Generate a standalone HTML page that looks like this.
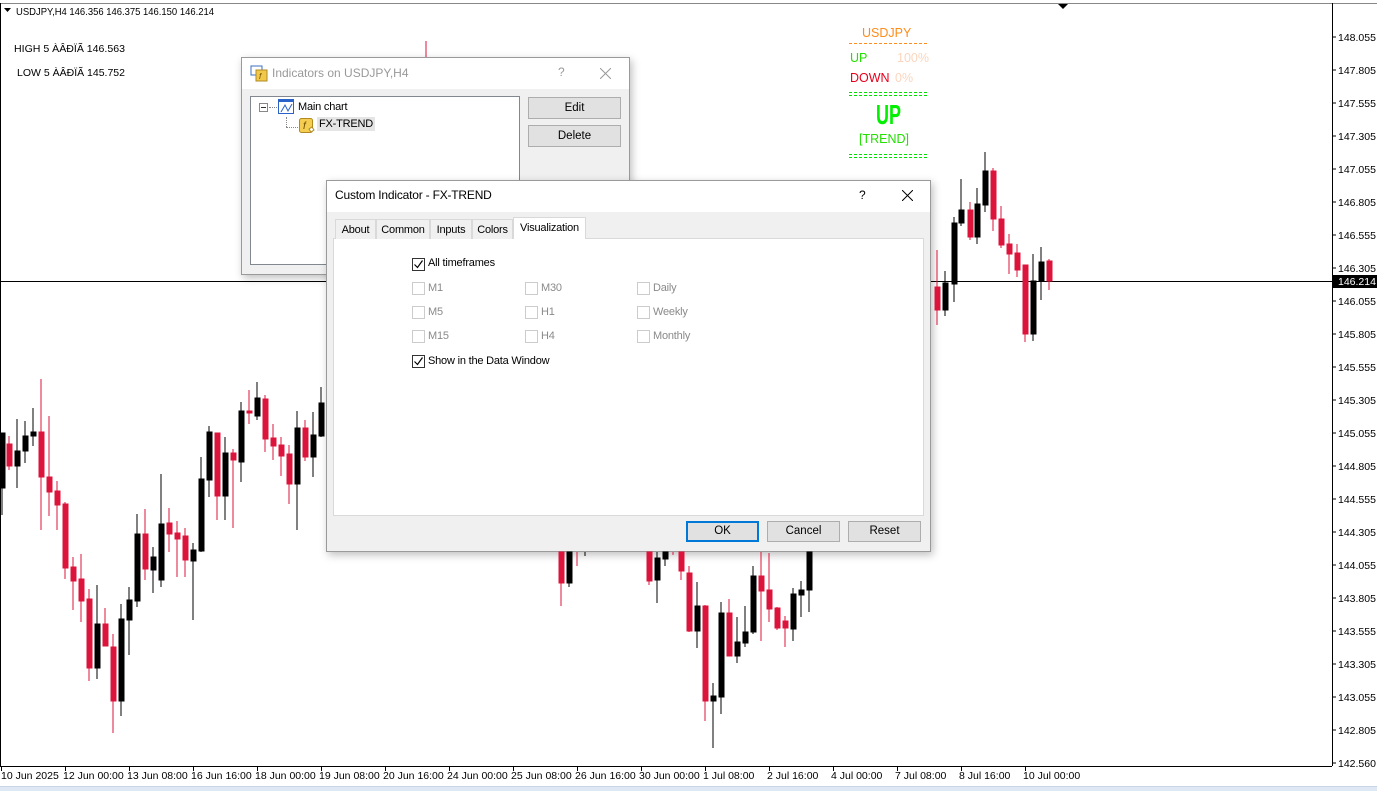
<!DOCTYPE html>
<html><head><meta charset="utf-8"><style>
*{margin:0;padding:0;box-sizing:border-box}
body{width:1377px;height:791px;overflow:hidden;background:#fff;font-family:"Liberation Sans",sans-serif;position:relative}
.abs{position:absolute;white-space:nowrap}
.dlg{position:absolute;background:#f0f0f0;border:1px solid #9a9a9a;box-shadow:2px 3px 8px rgba(0,0,0,.25)}
.tb{position:absolute;left:0;right:0;top:0;background:#fff;font-size:12px}
.btn{position:absolute;background:#e1e1e1;border:1px solid #adadad;font-size:11.5px;text-align:center;color:#000}
.cb{position:absolute;width:13px;height:13px;border:1px solid #333;background:#fff}
.cb.d{border-color:#ccc}
.lbl{position:absolute;font-size:11px;white-space:nowrap;letter-spacing:-0.2px}
.g{color:#8a8a8a}
.tab{position:absolute;top:219px;height:20px;border:1px solid #d9d9d9;border-bottom:none;font-size:11px;padding:4px 0 0;text-align:center;background:#f0f0f0;letter-spacing:-0.2px}
</style></head><body>
<svg class="abs" style="left:0;top:0" width="1377" height="791">
<line x1="0" y1="3.5" x2="1377" y2="3.5" stroke="#888"/>
<line x1="0.5" y1="3" x2="0.5" y2="766" stroke="#000"/>
<line x1="1332.5" y1="3" x2="1332.5" y2="766" stroke="#000"/>
<line x1="0" y1="766.5" x2="1332" y2="766.5" stroke="#000"/>
<line x1="0" y1="281.5" x2="1332" y2="281.5" stroke="#000"/>
<path d="M1058 4h10l-5 5z" fill="#000"/>
<rect x="0" y="786" width="1377" height="5" fill="#dde8f4"/>
<line x1="0" y1="786.5" x2="1377" y2="786.5" stroke="#c8d6e6"/>
<g font-family="Liberation Sans" font-size="10.5" fill="#000">
<g stroke="#000">
<line x1="1332" y1="37" x2="1336" y2="37"/><line x1="1332" y1="70" x2="1336" y2="70"/><line x1="1332" y1="103" x2="1336" y2="103"/><line x1="1332" y1="136" x2="1336" y2="136"/><line x1="1332" y1="169" x2="1336" y2="169"/><line x1="1332" y1="202" x2="1336" y2="202"/><line x1="1332" y1="235" x2="1336" y2="235"/><line x1="1332" y1="268" x2="1336" y2="268"/><line x1="1332" y1="301" x2="1336" y2="301"/><line x1="1332" y1="334" x2="1336" y2="334"/><line x1="1332" y1="367" x2="1336" y2="367"/><line x1="1332" y1="400" x2="1336" y2="400"/><line x1="1332" y1="433" x2="1336" y2="433"/><line x1="1332" y1="466" x2="1336" y2="466"/><line x1="1332" y1="499" x2="1336" y2="499"/><line x1="1332" y1="532" x2="1336" y2="532"/><line x1="1332" y1="565" x2="1336" y2="565"/><line x1="1332" y1="598" x2="1336" y2="598"/><line x1="1332" y1="631" x2="1336" y2="631"/><line x1="1332" y1="664" x2="1336" y2="664"/><line x1="1332" y1="697" x2="1336" y2="697"/><line x1="1332" y1="730" x2="1336" y2="730"/><line x1="1332" y1="763" x2="1336" y2="763"/>
</g>
<text x="1338" y="41">148.055</text><text x="1338" y="74">147.805</text><text x="1338" y="107">147.555</text><text x="1338" y="140">147.305</text><text x="1338" y="173">147.055</text><text x="1338" y="206">146.805</text><text x="1338" y="239">146.555</text><text x="1338" y="272">146.305</text><text x="1338" y="305">146.055</text><text x="1338" y="338">145.805</text><text x="1338" y="371">145.555</text><text x="1338" y="404">145.305</text><text x="1338" y="437">145.055</text><text x="1338" y="470">144.805</text><text x="1338" y="503">144.555</text><text x="1338" y="536">144.305</text><text x="1338" y="569">144.055</text><text x="1338" y="602">143.805</text><text x="1338" y="635">143.555</text><text x="1338" y="668">143.305</text><text x="1338" y="701">143.055</text><text x="1338" y="734">142.805</text><text x="1338" y="767">142.560</text>
<rect x="1333" y="275" width="44" height="13" fill="#000"/>
<text x="1338" y="285" fill="#fff">146.214</text>
<g stroke="#000"><line x1="1.5" y1="766" x2="1.5" y2="771"/><line x1="65.5" y1="766" x2="65.5" y2="771"/><line x1="129.5" y1="766" x2="129.5" y2="771"/><line x1="193.5" y1="766" x2="193.5" y2="771"/><line x1="257.5" y1="766" x2="257.5" y2="771"/><line x1="321.5" y1="766" x2="321.5" y2="771"/><line x1="385.5" y1="766" x2="385.5" y2="771"/><line x1="449.5" y1="766" x2="449.5" y2="771"/><line x1="513.5" y1="766" x2="513.5" y2="771"/><line x1="577.5" y1="766" x2="577.5" y2="771"/><line x1="641.5" y1="766" x2="641.5" y2="771"/><line x1="705.5" y1="766" x2="705.5" y2="771"/><line x1="769.5" y1="766" x2="769.5" y2="771"/><line x1="833.5" y1="766" x2="833.5" y2="771"/><line x1="897.5" y1="766" x2="897.5" y2="771"/><line x1="961.5" y1="766" x2="961.5" y2="771"/><line x1="1025.5" y1="766" x2="1025.5" y2="771"/></g>
<text x="1" y="779">10 Jun 2025</text><text x="63" y="779">12 Jun 00:00</text><text x="127" y="779">13 Jun 08:00</text><text x="191" y="779">16 Jun 16:00</text><text x="255" y="779">18 Jun 00:00</text><text x="319" y="779">19 Jun 08:00</text><text x="383" y="779">20 Jun 16:00</text><text x="447" y="779">24 Jun 00:00</text><text x="511" y="779">25 Jun 08:00</text><text x="575" y="779">26 Jun 16:00</text><text x="639" y="779">30 Jun 00:00</text><text x="703" y="779">1 Jul 08:00</text><text x="767" y="779">2 Jul 16:00</text><text x="831" y="779">4 Jul 00:00</text><text x="895" y="779">7 Jul 08:00</text><text x="959" y="779">8 Jul 16:00</text><text x="1023" y="779">10 Jul 00:00</text>
<path d="M4 8h7l-3.5 4z" fill="#000"/>
<text x="16" y="15" textLength="198" lengthAdjust="spacingAndGlyphs">USDJPY,H4  146.356 146.375 146.150 146.214</text>
<text x="14" y="52" textLength="111" lengthAdjust="spacingAndGlyphs">HIGH 5 ÀÂÐÏÃ    146.563</text>
<text x="17" y="76" textLength="108" lengthAdjust="spacingAndGlyphs">LOW 5 ÀÂÐÏÃ     145.752</text>
</g>
<g font-family="Liberation Sans" font-size="12.5">
<text x="862" y="37" fill="#ff8c1a">USDJPY</text>
<line x1="849" y1="43.5" x2="927" y2="43.5" stroke="#ff8c1a" stroke-dasharray="3,2"/>
<text x="850" y="62" fill="#22e000">UP</text><text x="897" y="62" fill="#fbd5bd">100%</text>
<text x="850" y="82" fill="#e8001c">DOWN</text><text x="895" y="82" fill="#fbd5bd">0%</text>
<line x1="849" y1="92.5" x2="927" y2="92.5" stroke="#00e000" stroke-dasharray="3,2"/><line x1="849" y1="95.5" x2="927" y2="95.5" stroke="#00e000" stroke-dasharray="3,2"/>
<text x="876" y="124" fill="#00f000" font-size="28" font-weight="bold" textLength="25" lengthAdjust="spacingAndGlyphs">UP</text>
<text x="859" y="143" fill="#22e000">[TREND]</text>
<line x1="849" y1="154.5" x2="927" y2="154.5" stroke="#00e000" stroke-dasharray="3,2"/><line x1="849" y1="157.5" x2="927" y2="157.5" stroke="#00e000" stroke-dasharray="3,2"/>
</g>
<line x1="426" y1="41" x2="426" y2="58" stroke="#dc143c"/>
</svg>

<!-- Indicators dialog -->
<div class="dlg" style="left:241px;top:57px;width:389px;height:218px">
 <div class="tb" style="height:31px">
  <svg class="abs" style="left:8px;top:7px" width="18" height="17"><rect x="1" y="1" width="11" height="9" fill="#fff" stroke="#3a6fc0"/><rect x="6" y="5" width="11" height="11" fill="#f2c84b" stroke="#b08a20"/><text x="9" y="14" font-size="8" font-style="italic" fill="#6a4a00">f</text></svg>
  <span class="abs" style="left:30px;top:8px;color:#999;font-size:12px">Indicators on USDJPY,H4</span>
  <span class="abs" style="left:316px;top:7px;color:#999">?</span>
  <svg class="abs" style="left:358px;top:10px" width="11" height="11"><path d="M0 0L11 11M11 0L0 11" stroke="#999"/></svg>
 </div>
 <div class="abs" style="left:8px;top:38px;width:270px;height:169px;background:#fff;border:1px solid #828790"></div>
 <div class="abs" style="left:17px;top:45px;width:9px;height:9px;border:1px solid #888;background:#fff"><div style="position:absolute;left:1px;top:3px;width:5px;border-top:1px solid #333"></div></div>
 <div class="abs" style="left:27px;top:49px;width:8px;border-top:1px dotted #888"></div>
 <svg class="abs" style="left:36px;top:41px" width="18" height="16"><rect x="0.5" y="0.5" width="15" height="14" fill="#fff" stroke="#2a62c8"/><rect x="1" y="1" width="15" height="2" fill="#2a62c8"/><path d="M3 13l4-7 3 6 4-7" stroke="#2a62c8" fill="none"/></svg>
 <span class="lbl" style="left:56px;top:43px">Main chart</span>
 <div class="abs" style="left:44px;top:59px;height:10px;border-left:1px dotted #888"></div>
 <div class="abs" style="left:44px;top:69px;width:12px;border-top:1px dotted #888"></div>
 <svg class="abs" style="left:57px;top:60px" width="16" height="16"><rect x="0.5" y="0.5" width="13" height="14" rx="2" fill="#f5cd50" stroke="#b08a20"/><text x="4" y="11" font-size="10" font-style="italic" fill="#6a4a00">f</text><path d="M10 11l3-2 2 3-3 2z" fill="#fff" stroke="#b08a20"/></svg>
 <span class="lbl" style="left:75px;top:59px;background:#e5e5e5;padding:1px 2px">FX-TREND</span>
 <div class="btn" style="left:286px;top:39px;width:93px;height:22px;line-height:20px">Edit</div>
 <div class="btn" style="left:286px;top:67px;width:93px;height:22px;line-height:20px">Delete</div>
</div>

<!-- Custom indicator dialog -->
<div class="dlg" style="left:326px;top:180px;width:605px;height:372px"></div>
<div class="tb abs" style="left:327px;top:181px;width:603px;height:31px;right:auto"></div>
<span class="lbl" style="left:335px;top:188px;font-size:12px">Custom Indicator - FX-TREND</span>
<span class="lbl" style="left:859px;top:188px;font-size:12px">?</span>
<svg class="abs" style="left:902px;top:190px" width="11" height="11"><path d="M0 0L11 11M11 0L0 11" stroke="#000"/></svg>
<div class="abs" style="left:333px;top:238px;width:591px;height:278px;background:#fff;border:1px solid #d9d9d9"></div>
<div class="tab" style="left:335px;width:41px">About</div>
<div class="tab" style="left:376px;width:54px">Common</div>
<div class="tab" style="left:430px;width:42px">Inputs</div>
<div class="tab" style="left:472px;width:41px">Colors</div>
<div class="tab" style="left:513px;top:217px;height:22px;width:73px;background:#fff;padding-top:4px">Visualization</div>
<svg class="abs" style="left:412px;top:258px" width="14" height="14"><rect x="0.5" y="0.5" width="12" height="12" fill="#fff" stroke="#333"/><path d="M2.5 6.5l3 3 5-7" stroke="#000" fill="none" stroke-width="1.2"/></svg>
<span class="lbl" style="left:428px;top:257px">All timeframes</span>
<div class="cb d" style="left:412px;top:282px"></div><span class="lbl g" style="left:428px;top:282px">M1</span>
<div class="cb d" style="left:412px;top:306px"></div><span class="lbl g" style="left:428px;top:306px">M5</span>
<div class="cb d" style="left:412px;top:330px"></div><span class="lbl g" style="left:428px;top:330px">M15</span>
<div class="cb d" style="left:525px;top:282px"></div><span class="lbl g" style="left:541px;top:282px">M30</span>
<div class="cb d" style="left:525px;top:306px"></div><span class="lbl g" style="left:541px;top:306px">H1</span>
<div class="cb d" style="left:525px;top:330px"></div><span class="lbl g" style="left:541px;top:330px">H4</span>
<div class="cb d" style="left:637px;top:282px"></div><span class="lbl g" style="left:653px;top:282px">Daily</span>
<div class="cb d" style="left:637px;top:306px"></div><span class="lbl g" style="left:653px;top:306px">Weekly</span>
<div class="cb d" style="left:637px;top:330px"></div><span class="lbl g" style="left:653px;top:330px">Monthly</span>
<svg class="abs" style="left:412px;top:355px" width="14" height="14"><rect x="0.5" y="0.5" width="12" height="12" fill="#fff" stroke="#333"/><path d="M2.5 6.5l3 3 5-7" stroke="#000" fill="none" stroke-width="1.2"/></svg>
<span class="lbl" style="left:428px;top:355px">Show in the Data Window</span>
<div class="btn" style="left:686px;top:521px;width:73px;height:21px;border:2px solid #0078d7;line-height:17px">OK</div>
<div class="btn" style="left:767px;top:521px;width:73px;height:21px;line-height:19px">Cancel</div>
<div class="btn" style="left:848px;top:521px;width:73px;height:21px;line-height:19px">Reset</div>

<svg class="abs" style="left:0;top:0" width="1377" height="791">
<g>
<g stroke="#000" fill="#000">
<line x1="2" y1="433" x2="2" y2="515"/><rect x="0" y="433" width="5" height="55"/>
<line x1="17" y1="419" x2="17" y2="488"/><rect x="15" y="451" width="5" height="15"/>
<line x1="25" y1="421" x2="25" y2="463"/><rect x="23" y="436" width="5" height="15"/>
<line x1="33" y1="408" x2="33" y2="446"/><rect x="31" y="432" width="5" height="4"/>
<line x1="97" y1="585" x2="97" y2="679"/><rect x="95" y="624" width="5" height="44"/>
<line x1="121" y1="604" x2="121" y2="716"/><rect x="119" y="619" width="5" height="82"/>
<line x1="129" y1="587" x2="129" y2="655"/><rect x="127" y="600" width="5" height="20"/>
<line x1="137" y1="514" x2="137" y2="607"/><rect x="135" y="534" width="5" height="67"/>
<line x1="153" y1="547" x2="153" y2="593"/><rect x="151" y="557" width="5" height="13"/>
<line x1="161" y1="474" x2="161" y2="587"/><rect x="159" y="524" width="5" height="56"/>
<line x1="193" y1="543" x2="193" y2="620"/><rect x="191" y="550" width="5" height="11"/>
<line x1="201" y1="457" x2="201" y2="552"/><rect x="199" y="479" width="5" height="72"/>
<line x1="209" y1="426" x2="209" y2="497"/><rect x="207" y="432" width="5" height="48"/>
<line x1="225" y1="437" x2="225" y2="520"/><rect x="223" y="453" width="5" height="43"/>
<line x1="241" y1="402" x2="241" y2="482"/><rect x="239" y="411" width="5" height="51"/>
<line x1="257" y1="382" x2="257" y2="420"/><rect x="255" y="398" width="5" height="18"/>
<line x1="297" y1="411" x2="297" y2="530"/><rect x="295" y="428" width="5" height="56"/>
<line x1="313" y1="412" x2="313" y2="477"/><rect x="311" y="435" width="5" height="22"/>
<line x1="321" y1="387" x2="321" y2="437"/><rect x="319" y="403" width="5" height="33"/>
</g>
<g stroke="#dc143c" fill="#dc143c">
<line x1="9" y1="436" x2="9" y2="470"/><rect x="7" y="444" width="5" height="22"/>
<line x1="41" y1="379" x2="41" y2="530"/><rect x="39" y="432" width="5" height="45"/>
<line x1="49" y1="416" x2="49" y2="516"/><rect x="47" y="477" width="5" height="15"/>
<line x1="57" y1="481" x2="57" y2="530"/><rect x="55" y="491" width="5" height="14"/>
<line x1="65" y1="502" x2="65" y2="579"/><rect x="63" y="504" width="5" height="64"/>
<line x1="73" y1="557" x2="73" y2="610"/><rect x="71" y="567" width="5" height="14"/>
<line x1="81" y1="554" x2="81" y2="622"/><rect x="79" y="579" width="5" height="22"/>
<line x1="89" y1="589" x2="89" y2="681"/><rect x="87" y="599" width="5" height="69"/>
<line x1="105" y1="608" x2="105" y2="646"/><rect x="103" y="624" width="5" height="22"/>
<line x1="113" y1="634" x2="113" y2="733"/><rect x="111" y="647" width="5" height="54"/>
<line x1="145" y1="509" x2="145" y2="580"/><rect x="143" y="534" width="5" height="35"/>
<line x1="169" y1="508" x2="169" y2="552"/><rect x="167" y="523" width="5" height="11"/>
<line x1="177" y1="521" x2="177" y2="577"/><rect x="175" y="533" width="5" height="6"/>
<line x1="185" y1="528" x2="185" y2="577"/><rect x="183" y="536" width="5" height="24"/>
<line x1="217" y1="433" x2="217" y2="520"/><rect x="215" y="433" width="5" height="63"/>
<line x1="233" y1="449" x2="233" y2="528"/><rect x="231" y="453" width="5" height="7"/>
<line x1="249" y1="390" x2="249" y2="424"/><rect x="247" y="411" width="5" height="2"/>
<line x1="265" y1="395" x2="265" y2="452"/><rect x="263" y="399" width="5" height="40"/>
<line x1="273" y1="424" x2="273" y2="460"/><rect x="271" y="438" width="5" height="8"/>
<line x1="281" y1="437" x2="281" y2="476"/><rect x="279" y="445" width="5" height="11"/>
<line x1="289" y1="445" x2="289" y2="504"/><rect x="287" y="454" width="5" height="30"/>
<line x1="305" y1="420" x2="305" y2="461"/><rect x="303" y="428" width="5" height="29"/>
</g>
<g stroke="#000" fill="#000">
<line x1="569" y1="552" x2="569" y2="587"/><rect x="567" y="552" width="5" height="31"/>
<line x1="585" y1="552" x2="585" y2="556"/>
<line x1="657" y1="552" x2="657" y2="603"/><rect x="655" y="558" width="5" height="22"/>
<line x1="665" y1="552" x2="665" y2="566"/><rect x="663" y="552" width="5" height="7"/>
<line x1="697" y1="582" x2="697" y2="648"/><rect x="695" y="606" width="5" height="25"/>
<line x1="713" y1="683" x2="713" y2="748"/><rect x="711" y="696" width="5" height="5"/>
<line x1="721" y1="602" x2="721" y2="714"/><rect x="719" y="613" width="5" height="84"/>
<line x1="737" y1="617" x2="737" y2="663"/><rect x="735" y="642" width="5" height="14"/>
<line x1="745" y1="606" x2="745" y2="647"/><rect x="743" y="632" width="5" height="11"/>
<line x1="753" y1="566" x2="753" y2="634"/><rect x="751" y="576" width="5" height="56"/>
<line x1="793" y1="588" x2="793" y2="641"/><rect x="791" y="594" width="5" height="35"/>
<line x1="801" y1="581" x2="801" y2="617"/><rect x="799" y="590" width="5" height="5"/>
<line x1="809" y1="552" x2="809" y2="612"/><rect x="807" y="552" width="5" height="38"/>
</g>
<g stroke="#dc143c" fill="#dc143c">
<line x1="561" y1="552" x2="561" y2="606"/><rect x="559" y="552" width="5" height="31"/>
<line x1="577" y1="552" x2="577" y2="566"/>
<line x1="649" y1="552" x2="649" y2="585"/><rect x="647" y="552" width="5" height="29"/>
<line x1="673" y1="552" x2="673" y2="555"/>
<line x1="681" y1="552" x2="681" y2="580"/><rect x="679" y="552" width="5" height="19"/>
<line x1="689" y1="566" x2="689" y2="632"/><rect x="687" y="573" width="5" height="58"/>
<line x1="705" y1="605" x2="705" y2="721"/><rect x="703" y="606" width="5" height="95"/>
<line x1="729" y1="599" x2="729" y2="656"/><rect x="727" y="613" width="5" height="43"/>
<line x1="761" y1="552" x2="761" y2="641"/><rect x="759" y="576" width="5" height="15"/>
<line x1="769" y1="553" x2="769" y2="622"/><rect x="767" y="590" width="5" height="19"/>
<line x1="777" y1="607" x2="777" y2="630"/><rect x="775" y="608" width="5" height="20"/>
<line x1="785" y1="616" x2="785" y2="647"/><rect x="783" y="621" width="5" height="7"/>
</g>
<g stroke="#000" fill="#000">
<line x1="945" y1="271" x2="945" y2="316"/><rect x="943" y="283" width="5" height="27"/>
<line x1="954" y1="217" x2="954" y2="302"/><rect x="952" y="223" width="5" height="61"/>
<line x1="961" y1="179" x2="961" y2="226"/><rect x="959" y="210" width="5" height="13"/>
<line x1="977" y1="188" x2="977" y2="244"/><rect x="975" y="204" width="5" height="33"/>
<line x1="985" y1="152" x2="985" y2="212"/><rect x="983" y="171" width="5" height="34"/>
<line x1="1033" y1="254" x2="1033" y2="341"/><rect x="1031" y="281" width="5" height="53"/>
<line x1="1041" y1="247" x2="1041" y2="300"/><rect x="1039" y="262" width="5" height="19"/>
</g>
<g stroke="#dc143c" fill="#dc143c">
<line x1="937" y1="250" x2="937" y2="325"/><rect x="935" y="287" width="5" height="23"/>
<line x1="970" y1="202" x2="970" y2="240"/><rect x="968" y="210" width="5" height="27"/>
<line x1="993" y1="168" x2="993" y2="231"/><rect x="991" y="171" width="5" height="48"/>
<line x1="1001" y1="206" x2="1001" y2="248"/><rect x="999" y="219" width="5" height="26"/>
<line x1="1009" y1="234" x2="1009" y2="274"/><rect x="1007" y="244" width="5" height="10"/>
<line x1="1017" y1="244" x2="1017" y2="277"/><rect x="1015" y="253" width="5" height="17"/>
<line x1="1025" y1="265" x2="1025" y2="342"/><rect x="1023" y="265" width="5" height="69"/>
<line x1="1049" y1="259" x2="1049" y2="290"/><rect x="1047" y="261" width="5" height="20"/>
</g>
</g>
</svg>
</body></html>
